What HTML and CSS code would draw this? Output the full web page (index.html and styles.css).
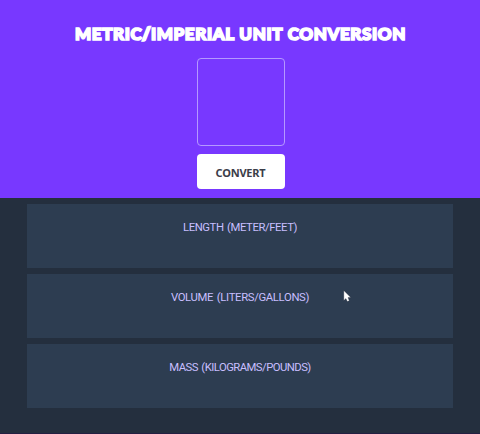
FILE: index.html
```html
<!DOCTYPE html>
<html lang="en">
<head>
<meta charset="utf-8">
<title>Metric/Imperial Unit Conversion</title>
<link rel="stylesheet" href="styles.css">
</head>
<body>
<header class="converter">
  <h1 class="title">METRIC<span class="slash">/</span>IMPERIAL UNIT CONVERSION</h1>
  <input class="amount" type="text">
  <button class="convert">CONVERT</button>
</header>
<main class="results">
  <section class="card"><h2 class="label length">LENGTH (METER/FEET)</h2></section>
  <section class="card"><h2 class="label volume">VOLUME (LITERS/GALLONS)</h2></section>
  <section class="card"><h2 class="label mass">MASS (KILOGRAMS/POUNDS)</h2></section>
</main>
<svg class="cursor" width="8" height="12" viewBox="0 0 8 12"><path d="M.8.5v10l2.1-1.9 1.4 3 2-.8-1.3-3.2h2.8z" fill="#fff" stroke="#17202d" stroke-width=".3"/></svg>
</body>
</html>
```
FILE: styles.css
```css
* { box-sizing: border-box; }
body {
  margin: 0;
  height: 434px;
  overflow: hidden;
  background: #242f3e;
  border-bottom: 1px solid #241f42;
}
.converter {
  height: 198px;
  padding-top: 21px;
  background: #7838ff;
  display: flex;
  flex-direction: column;
  align-items: center;
}
.title {
  margin: 0 0 0 1px;
  height: 37px;
  font: 900 17px/26px Lato, sans-serif;
  letter-spacing: 0.62px;
  word-spacing: 0.5px;
  color: #fff;
  -webkit-text-stroke: 1.7px #fff;
  white-space: nowrap;
}
.slash {
  -webkit-text-stroke-width: 2.4px;
}
.amount {
  width: 88px;
  height: 88px;
  margin-left: 1px;
  padding: 8px;
  border: 1px solid #b598ff;
  border-radius: 4px;
  background: transparent;
  color: #fff;
  text-align: center;
  outline: none;
}
.convert {
  width: 88px;
  height: 35px;
  margin: 8px 0 0 1px;
  padding: 3px 0 0;
  border: 0;
  border-radius: 4px;
  background: #fff;
  color: #3b3d49;
  font: 700 11px/16px "Noto Sans", sans-serif;
  letter-spacing: -0.2px;
}
.results {
  padding: 6px 27px 0;
  display: grid;
  gap: 6px;
}
.card {
  height: 64px;
  padding-top: 15px;
  background: #2d3d51;
  text-align: center;
}
.label {
  margin: 0;
  font: 400 11.3px/17px Roboto, sans-serif;
  word-spacing: 1.2px;
  color: #c8bfff;
}
.length { letter-spacing: -0.42px; }
.volume { letter-spacing: -0.34px; }
.mass { letter-spacing: -0.54px; }
.cursor {
  position: absolute;
  left: 343px;
  top: 290px;
}
```
